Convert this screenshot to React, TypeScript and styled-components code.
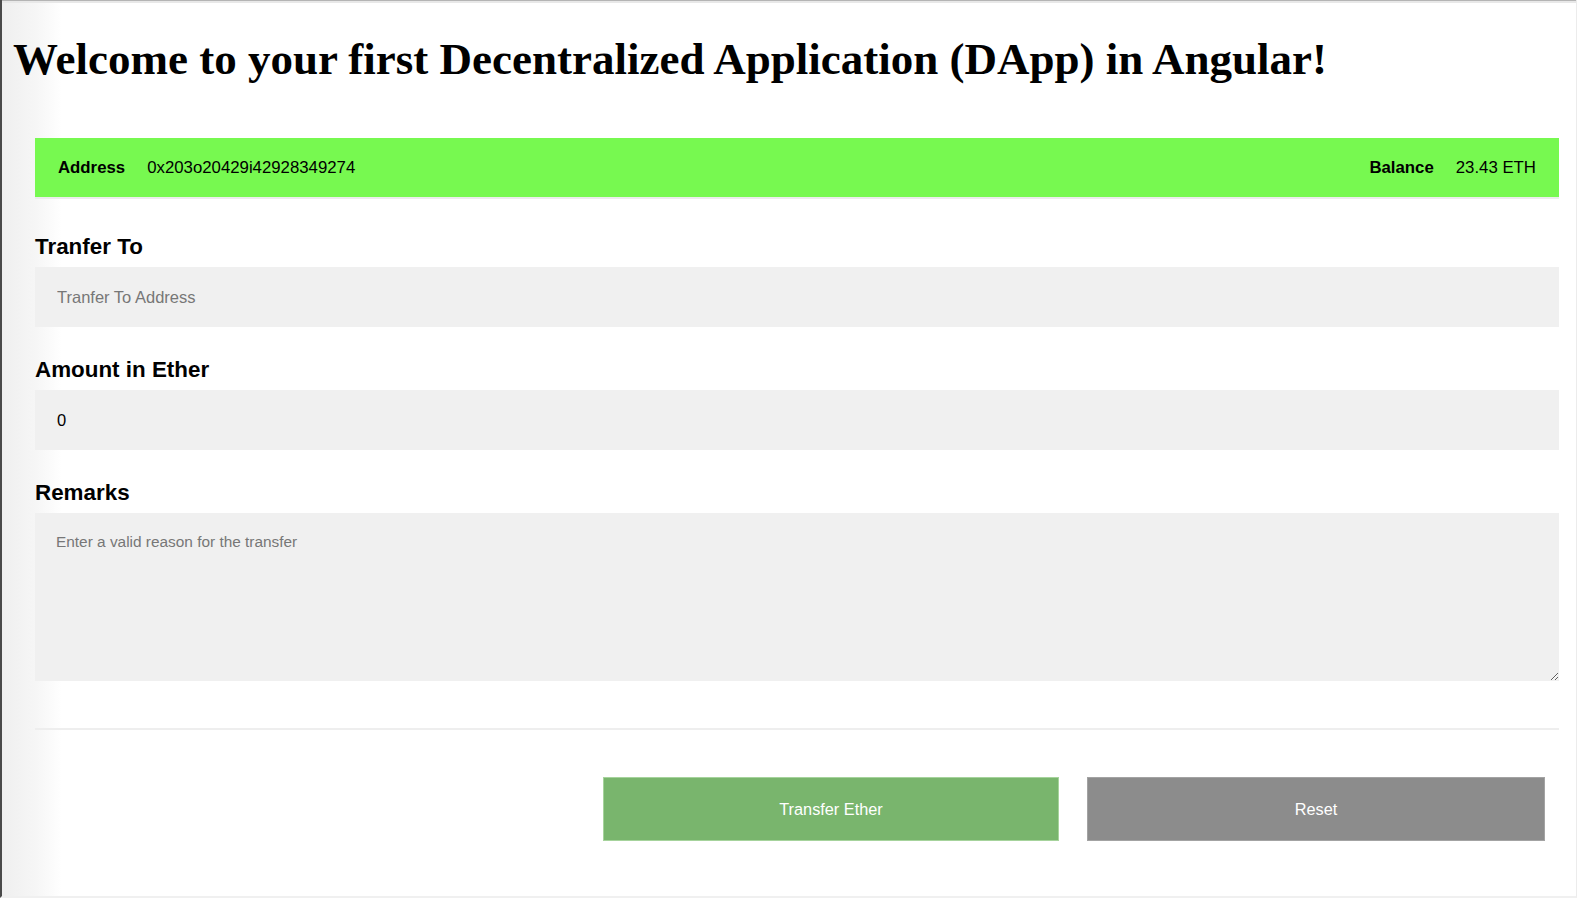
import React from "react";
import styled, { createGlobalStyle } from "styled-components";

const GlobalStyle = createGlobalStyle`
  html, body {
    margin: 0;
    padding: 0;
    background: #ffffff;
  }
  * { box-sizing: border-box; }
`;

const Page = styled.div`
  width: 1577px;
  height: 898px;
  overflow: hidden;
  border-left: 2px solid #4a4a4a;
  border-right: 1px solid #ececec;
  border-bottom: 2px solid #f0f0f0;
  background:
    linear-gradient(to bottom, #b4b4b4 0, #b4b4b4 1px, #e8e8e8 1px, #e8e8e8 3px, rgba(255,255,255,0) 3px),
    linear-gradient(to right, #efefef 0, #f6f6f6 34px, #ffffff 60px);
  display: flex;
  flex-direction: column;
`;

const Title = styled.h1`
  margin: 36px 0 0 11px;
  font-family: "Liberation Serif", "Times New Roman", serif;
  font-weight: 700;
  font-size: 45px;
  line-height: 46px;
  color: #000;
  white-space: nowrap;
`;

const Container = styled.div`
  margin: 56px 17px 0 33px;
  display: flex;
  flex-direction: column;
  font-family: "Liberation Sans", Arial, Helvetica, sans-serif;
`;

const AccountBar = styled.div`
  height: 59px;
  background: #77f950;
  box-shadow: 0 2px 0 #ececec;
  display: flex;
  align-items: center;
  justify-content: space-between;
  padding: 0 23px;
  font-size: 16.8px;
  color: #000;
`;

const InfoGroup = styled.div`
  display: flex;
  align-items: center;
  gap: 22px;
`;

const InfoLabel = styled.span`
  font-weight: 700;
`;

const InfoValue = styled.span`
  font-weight: 400;
`;

const FormGroup = styled.div<{ $first?: boolean }>`
  display: flex;
  flex-direction: column;
  margin-top: ${(p) => (p.$first ? "37px" : "30px")};
`;

const Label = styled.label`
  font-size: 22.4px;
  line-height: 26px;
  font-weight: 700;
  color: #000;
  margin-bottom: 7px;
`;

const TextInput = styled.input`
  height: 60px;
  border: none;
  outline: none;
  background: #f0f0f0;
  padding: 0 22px;
  font-family: "Liberation Sans", Arial, Helvetica, sans-serif;
  font-size: 16.5px;
  color: #000;
  &::placeholder {
    color: #777777;
  }
`;

const TextArea = styled.textarea`
  height: 168px;
  border: none;
  outline: none;
  background: #f0f0f0;
  padding: 20px 21px;
  font-family: "Liberation Sans", Arial, Helvetica, sans-serif;
  font-size: 15.4px;
  color: #000;
  resize: vertical;
  &::placeholder {
    color: #777777;
  }
`;

const Divider = styled.div`
  height: 2px;
  background: #eeeeee;
  margin-top: 47px;
`;

const ButtonRow = styled.div`
  display: flex;
  justify-content: flex-end;
  gap: 28px;
  padding-right: 14px;
  margin-top: 47px;
`;

const ActionButton = styled.button<{ $variant: "primary" | "secondary" }>`
  width: ${(p) => (p.$variant === "primary" ? "456px" : "458px")};
  height: 64px;
  border: 1px solid ${(p) => (p.$variant === "primary" ? "#a6d39c" : "#a3a3a3")};
  background: ${(p) => (p.$variant === "primary" ? "#79b56d" : "#8c8c8c")};
  color: #ffffff;
  font-family: "Liberation Sans", Arial, Helvetica, sans-serif;
  font-size: 16.3px;
  cursor: pointer;
`;

export default function App() {
  return (
    <>
      <GlobalStyle />
      <Page>
        <Title>Welcome to your first Decentralized Application (DApp) in Angular!</Title>
        <Container>
          <AccountBar>
            <InfoGroup>
              <InfoLabel>Address</InfoLabel>
              <InfoValue>0x203o20429i42928349274</InfoValue>
            </InfoGroup>
            <InfoGroup>
              <InfoLabel>Balance</InfoLabel>
              <InfoValue>23.43 ETH</InfoValue>
            </InfoGroup>
          </AccountBar>

          <FormGroup $first>
            <Label htmlFor="to">Tranfer To</Label>
            <TextInput id="to" type="text" placeholder="Tranfer To Address" />
          </FormGroup>

          <FormGroup>
            <Label htmlFor="amount">Amount in Ether</Label>
            <TextInput id="amount" type="text" defaultValue="0" />
          </FormGroup>

          <FormGroup>
            <Label htmlFor="remarks">Remarks</Label>
            <TextArea id="remarks" placeholder="Enter a valid reason for the transfer" />
          </FormGroup>

          <Divider />

          <ButtonRow>
            <ActionButton $variant="primary">Transfer Ether</ActionButton>
            <ActionButton $variant="secondary">Reset</ActionButton>
          </ButtonRow>
        </Container>
      </Page>
    </>
  );
}
